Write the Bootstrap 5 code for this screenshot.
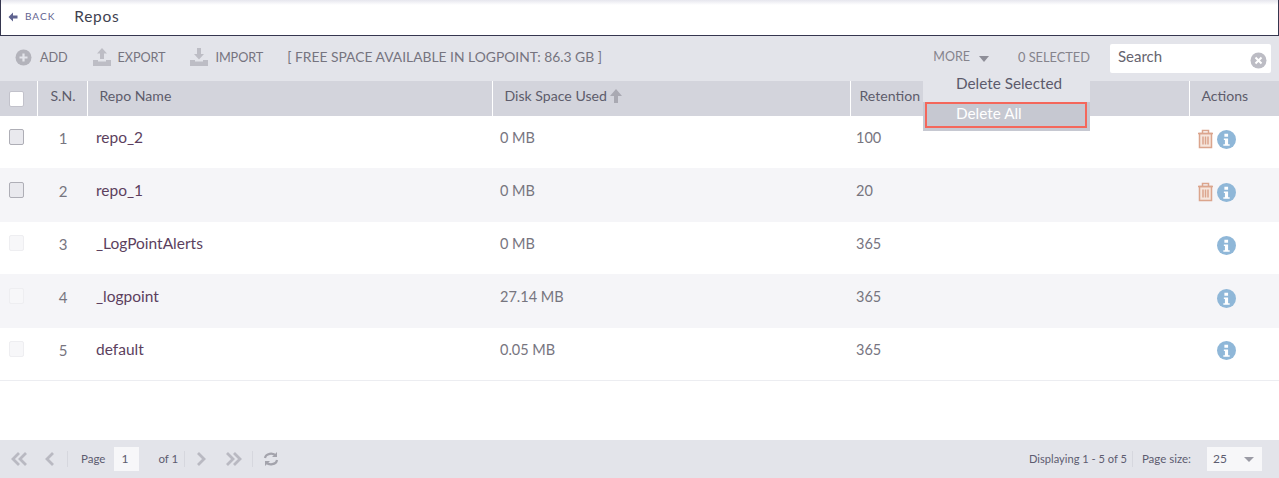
<!DOCTYPE html>
<html lang="en">
<head>
<meta charset="utf-8">
<title>Repos</title>
<link href="https://cdn.jsdelivr.net/npm/bootstrap@5.3.0/dist/css/bootstrap.min.css" rel="stylesheet">
<style>
html,body{height:478px;overflow:hidden;background:#fff}
body{font-family:Lato,"Open Sans",sans-serif;font-size:14px;color:#6f6c78;position:relative}
.topbar{height:36px;border:1px solid #35364f;border-top:0;background:linear-gradient(#e6e6ee 0,#fff 5px);padding:0 0 2px 7px}
.back{font-size:10px;letter-spacing:1px;color:#5f6390;margin-left:7px;margin-right:19px}
.title{font-size:15.500px;letter-spacing:.7px;color:#403f50}
.toolbar{height:45px;background:#e3e4ea;font-size:12.700px;color:#76747f;padding:0 0 2px 15px}
.tool{margin-right:25px;letter-spacing:-.1px}
.tool svg{margin-right:7px}
.tool:first-child svg{margin-right:8px}
.tool:nth-child(3){margin-right:24px}
.free{font-size:13.850px}
.more{margin-right:29px;font-size:12.500px;color:#85838c;display:flex;align-items:center}
.caret-shape{display:inline-block;border:5px solid transparent;border-top:6px solid #8e8e98;border-bottom:0;margin-left:9px;margin-top:2px}
.sel{margin-right:20px;font-size:12.800px;color:#85838c}
.searchbox{width:161px;height:29px;background:#fff;margin-right:8px;padding:0 4px 0 8px;font-size:15px;color:#66646f;border-radius:2px;margin-top:1px}
.searchbox span{margin-bottom:3px}
.gridtable{table-layout:fixed;width:1279px;margin:0;border-collapse:collapse;--bs-table-bg:transparent;--bs-table-color:#77757f}
.gridtable th{background:#d3d4dc;height:35px;padding:0 0 5px 12px;font-weight:400;font-size:14.100px;color:#5d5c6b;border:0;border-left:1px solid #fff;vertical-align:middle;white-space:nowrap}
.gridtable th:first-child{border-left:0}
.gridtable td{padding:0 0 8px 8px;border:0;font-size:14.500px;color:#77757f;vertical-align:middle}
.gridtable tbody tr:nth-child(even) td{background:#f5f5f8}
.gridtable tbody tr:last-child td{border-bottom:1px solid #ecedf1}
.rowa{height:52px}.rowb{height:54px}
.gridtable td.sn{text-align:center;padding-left:2px;padding-right:0;font-size:15px}
.gridtable td.nm{color:#5c3f5e;font-size:15.500px;padding-left:9px}
.gridtable td.ret{padding-left:6px}
.gridtable td.act{padding:0 0 6px 8px}
.acts{display:flex;justify-content:flex-end;align-items:center;gap:3px;padding-right:43px}
.box{display:block;width:15px;height:16px;border-radius:2px;border:1px solid #aeaeb6;background:#e9e9ee}
.box-w{background:#fff;border-color:#c2c2cb;margin-top:2px}
.box-off{background:#f7f7f9;border-color:#eeeef1}
.gridtable td.cb{padding:0 0 10px 9px}
.gridtable th.cb{padding:0 0 1px 9px}
.gridtable th.ctr{padding-left:2px}
.gridtable th.rt{padding-left:9px}
.moremenu{position:absolute;left:923px;top:71px;width:167px;height:60px;background:#e3e4ea;padding-top:1px;z-index:2}
.moremenu .dropdown-item{padding:0;font-size:15.300px;color:#5c5a6c;height:28px;line-height:22px;padding-left:33px;background:transparent}
.delwrap{position:absolute;left:0;right:0;top:31px;height:29px;background:#c6c8d1;padding:0 3px 3px 2px}
.moremenu .delwrap .dropdown-item{height:26px;border:2px solid #f4675b;color:#fff;padding-left:29px;line-height:19px}
.pager{position:absolute;left:0;right:0;top:440px;height:38px;background:#e3e4ea;font-size:11.500px;color:#5d5c70;padding-left:11px}
.sep{width:1px;height:16px;background:#d6d7de;margin:0 10px}
.pgnum{width:25px;height:24px;background:#f7f7f9;padding-left:7px;line-height:24px;font-size:12px;margin-left:9px;margin-right:19px}
.pgsize{width:55px;height:24px;background:#f7f7f9;padding:0 8px 0 6px;margin:0 17px 0 16px;font-size:12px}
.pgsize i{border:5px solid transparent;border-top:5px solid #9b9ba5;border-bottom:0;display:block}
.dsp{font-size:11.100px}
</style>
</head>
<body>
<div class="topbar d-flex align-items-center">
  <svg width="10" height="10" viewBox="0 0 10 10"><path d="M5 .5 .5 5 5 9.500V6.500h4.500v-3H5z" fill="#5f6390"/></svg>
  <span class="back">BACK</span><span class="title">Repos</span>
</div>
<div class="toolbar d-flex align-items-center">
  <span class="tool d-flex align-items-center"><svg width="17" height="17" viewBox="0 0 17 17"><circle cx="8.500" cy="8.500" r="8" fill="#b3b3bb"/><path d="M8.500 4.500v8M4.500 8.500h8" stroke="#e3e4ea" stroke-width="2.200"/></svg>ADD</span>
  <span class="tool d-flex align-items-center"><svg width="18" height="18" viewBox="0 0 18 18" fill="#bdbdc5"><path d="M9 0l5 5.500h-3V11H7V5.500H4zM0 12h5v1.500h8V12h5v6H0z"/></svg>EXPORT</span>
  <span class="tool d-flex align-items-center"><svg width="18" height="18" viewBox="0 0 18 18" fill="#bdbdc5"><path d="M7 0h4v6h3l-5 5.500L4 6h3zM0 12h5v1.500h8V12h5v6H0z"/></svg>IMPORT</span>
  <span class="free">[ FREE SPACE AVAILABLE IN LOGPOINT: 86.3 GB ]</span>
  <span class="more ms-auto">MORE<i class="caret-shape"></i></span>
  <span class="sel">0 SELECTED</span>
  <div class="searchbox d-flex align-items-center justify-content-between"><span>Search</span><svg width="17" height="17" viewBox="0 0 17 17" class="mt-1"><circle cx="8.500" cy="8.500" r="8" fill="#bcbcc4"/><path d="M5.500 5.500l6 6M11.500 5.500l-6 6" stroke="#fff" stroke-width="2"/></svg></div>
</div>
<table class="table gridtable">
  <colgroup><col style="width:37px"><col style="width:50px"><col style="width:405px"><col style="width:358px"><col style="width:339px"><col></colgroup>
  <thead><tr><th class="cb"><span class="box box-w"></span></th><th class="text-center ctr">S.N.</th><th>Repo Name</th><th>Disk Space Used <svg width="12" height="14" viewBox="0 0 12 14" fill="#a9a9b2" style="vertical-align:-2px"><path d="M6 0l6 7H8v7H4V7H0z"/></svg></th><th class="rt">Retention</th><th>Actions</th></tr></thead>
  <tbody>
    <tr class="rowa"><td class="cb"><span class="box"></span></td><td class="sn">1</td><td class="nm">repo_2</td><td>0 MB</td><td class="ret">100</td><td class="act"><div class="acts"><svg width="17" height="20" viewBox="0 0 17 20" fill="none" stroke="#dba58d" stroke-width="1.500"><path d="M2.500 4.500h12v14h-12z" fill="#f6e6dd"/><path d="M1 4.500h15M5.500 4.500V1.500h6v3M6 7.500v8M8.500 7.500v8M11 7.500v8"/></svg><svg width="19" height="19" viewBox="0 0 18 18"><circle cx="9" cy="9" r="9" fill="#8fb7d8"/><path d="M7 3.500h3.500v3H7zM6.500 8h4v5.500H12V15H6v-1.500h1.500V9.500h-1z" fill="#fff"/></svg></div></td></tr>
    <tr class="rowb"><td class="cb"><span class="box"></span></td><td class="sn">2</td><td class="nm">repo_1</td><td>0 MB</td><td class="ret">20</td><td class="act"><div class="acts"><svg width="17" height="20" viewBox="0 0 17 20" fill="none" stroke="#dba58d" stroke-width="1.500"><path d="M2.500 4.500h12v14h-12z" fill="#f6e6dd"/><path d="M1 4.500h15M5.500 4.500V1.500h6v3M6 7.500v8M8.500 7.500v8M11 7.500v8"/></svg><svg width="19" height="19" viewBox="0 0 18 18"><circle cx="9" cy="9" r="9" fill="#8fb7d8"/><path d="M7 3.500h3.500v3H7zM6.500 8h4v5.500H12V15H6v-1.500h1.500V9.500h-1z" fill="#fff"/></svg></div></td></tr>
    <tr class="rowa"><td class="cb"><span class="box box-off"></span></td><td class="sn">3</td><td class="nm">_LogPointAlerts</td><td>0 MB</td><td class="ret">365</td><td class="act"><div class="acts"><svg width="19" height="19" viewBox="0 0 18 18"><circle cx="9" cy="9" r="9" fill="#8fb7d8"/><path d="M7 3.500h3.500v3H7zM6.500 8h4v5.500H12V15H6v-1.500h1.500V9.500h-1z" fill="#fff"/></svg></div></td></tr>
    <tr class="rowb"><td class="cb"><span class="box box-off"></span></td><td class="sn">4</td><td class="nm">_logpoint</td><td>27.14 MB</td><td class="ret">365</td><td class="act"><div class="acts"><svg width="19" height="19" viewBox="0 0 18 18"><circle cx="9" cy="9" r="9" fill="#8fb7d8"/><path d="M7 3.500h3.500v3H7zM6.500 8h4v5.500H12V15H6v-1.500h1.500V9.500h-1z" fill="#fff"/></svg></div></td></tr>
    <tr class="rowa"><td class="cb"><span class="box box-off"></span></td><td class="sn">5</td><td class="nm">default</td><td>0.05 MB</td><td class="ret">365</td><td class="act"><div class="acts"><svg width="19" height="19" viewBox="0 0 18 18"><circle cx="9" cy="9" r="9" fill="#8fb7d8"/><path d="M7 3.500h3.500v3H7zM6.500 8h4v5.500H12V15H6v-1.500h1.500V9.500h-1z" fill="#fff"/></svg></div></td></tr>
  </tbody>
</table>
<div class="moremenu">
  <a class="dropdown-item" href="#">Delete Selected</a>
  <div class="delwrap"><a class="dropdown-item" href="#">Delete All</a></div>
</div>
<div class="pager d-flex align-items-center">
  <svg width="17" height="16" viewBox="0 0 17 16" fill="none" stroke="#b9b9c2" stroke-width="2.800"><path d="M8 2 2 8l6 6M15 2 9 8l6 6"/></svg>
  <svg width="11" height="16" viewBox="0 0 11 16" fill="none" stroke="#b9b9c2" stroke-width="2.800" class="ms-3"><path d="M9 2 3 8l6 6"/></svg>
  <i class="sep" style="margin:0 13px 0 12px"></i>
  <span>Page</span><span class="pgnum">1</span><span>of 1</span>
  <i class="sep" style="margin:0 3px 0 6px"></i>
  <svg width="11" height="16" viewBox="0 0 11 16" fill="none" stroke="#b9b9c2" stroke-width="2.800" class="ms-2"><path d="M2 2l6 6-6 6"/></svg>
  <svg width="17" height="16" viewBox="0 0 17 16" fill="none" stroke="#b9b9c2" stroke-width="2.800" style="margin-left:18px"><path d="M2 2l6 6-6 6M9 2l6 6-6 6"/></svg>
  <i class="sep"></i>
  <svg width="16" height="16" viewBox="0 0 16 16" fill="none" stroke="#a3a3ac" stroke-width="2.200"><path d="M2 7a6 5 0 0 1 11-2M14 9a6 5 0 0 1-11 2"/><path d="M14 1v5H9zM2 15v-5h5z" fill="#a3a3ac" stroke="none"/></svg>
  <span class="ms-auto dsp">Displaying 1 - 5 of 5</span>
  <i class="sep" style="margin:0 5px"></i>
  <span class="ms-1">Page size:</span>
  <div class="pgsize d-flex align-items-center justify-content-between"><span>25</span><i></i></div>
</div>
</body>
</html>
